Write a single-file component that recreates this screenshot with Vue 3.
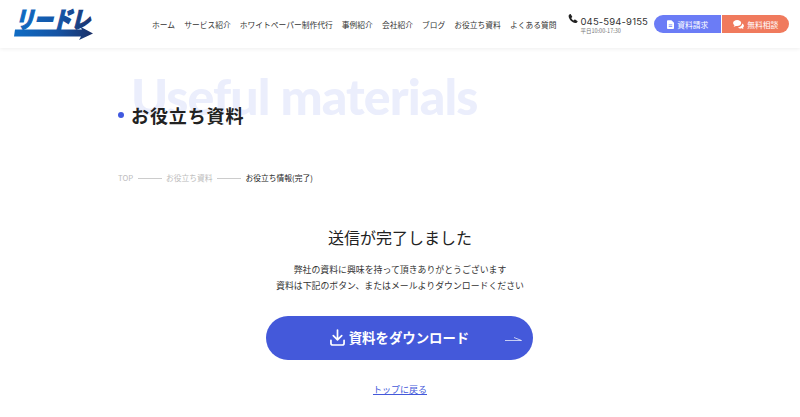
<template>
  <div class="page">
    <header class="header">
      <a class="logo">
        <svg width="80" height="34" viewBox="0 0 80 34">
          <defs>
            <linearGradient id="logoGrad" gradientUnits="userSpaceOnUse" x1="0" x2="80" y1="0" y2="0">
              <stop offset="0" stop-color="#0f6cc4" />
              <stop offset=".55" stop-color="#1553a3" />
              <stop offset="1" stop-color="#1b2f66" />
            </linearGradient>
          </defs>
          <text class="logo-text" transform="translate(1 19.500) skewX(-14) scale(1 1.200)" textLength="75" lengthAdjust="spacingAndGlyphs" fill="url(#logoGrad)" stroke="url(#logoGrad)" stroke-width="1.100">リードレ</text>
          <path d="M1 21.500 L68 21.500 L66 18.500 L79 25.500 L65 32 L67 28.500 L0 28.500 Z" fill="url(#logoGrad)" />
        </svg>
      </a>
      <nav class="nav">
        <a v-for="item in navItems" :key="item">{{ item }}</a>
      </nav>
      <div class="tel">
        <div class="tel-num">
          <svg width="10" height="11" viewBox="0 0 24 24"><path fill="#222" d="M6.600 1.500 10 7.200c.4.600.2 1.300-.3 1.800L7.800 10.700c1 2.500 3 4.700 5.500 6l1.900-1.900c.5-.5 1.200-.6 1.800-.3l5.500 3.300c.7.400.8 1.200.4 1.800-1.300 2-3.100 3.400-5.400 3.200C10 22 2.200 13.800 1.500 6.500 1.300 4.500 3 2.500 4.800 1.200c.6-.4 1.400-.3 1.800.3z" /></svg>
          <span>045-594-9155</span>
        </div>
        <div class="tel-time">平日10:00-17:30</div>
      </div>
      <div class="cta">
        <a class="cta-btn cta-doc">
          <svg width="7" height="9" viewBox="0 0 16 20"><path fill="#fff" d="M2 0h8l6 6v12a2 2 0 0 1-2 2H2a2 2 0 0 1-2-2V2a2 2 0 0 1 2-2z" /><path fill="#6b7cf6" d="M4 10h8v1.500H4zM4 14h8v1.500H4z" /></svg>
          資料請求
        </a>
        <a class="cta-btn cta-talk">
          <svg width="11" height="9" viewBox="0 0 24 20"><path fill="#fff" d="M9 0c5 0 9 3 9 6.800s-4 6.800-9 6.800c-1 0-2-.1-2.900-.4C4.800 14.200 3 15 1 15c1-1 1.800-2.200 2-3.400C1.200 10.400 0 8.700 0 6.800 0 3 4 0 9 0z" /><path fill="#fff" d="M20 8c2.500 1 4 3 4 5.200 0 1.600-.8 3-2.200 4 .2 1 .9 2 1.700 2.800-1.700 0-3.200-.6-4.300-1.500-.7.200-1.500.3-2.200.3-2.500 0-4.700-.9-6-2.400 5.500-.2 9.500-3.900 9-8.400z" /></svg>
          無料相談
        </a>
      </div>
    </header>

    <main class="main">
      <div class="title-block">
        <div class="title-en">Useful materials</div>
        <h1 class="title"><i class="dot"></i>お役立ち資料</h1>
      </div>
      <div class="crumbs">
        <span class="crumb">TOP</span>
        <i class="crumb-line"></i>
        <span class="crumb">お役立ち資料</span>
        <i class="crumb-line"></i>
        <span class="crumb-now">お役立ち情報(完了)</span>
      </div>
      <section class="done">
        <h2>送信が完了しました</h2>
        <p>弊社の資料に興味を持って頂きありがとうございます<br />資料は下記のボタン、またはメールよりダウンロードください</p>
        <a class="dl">
          <svg width="15" height="17" viewBox="0 0 16 18" fill="none" stroke="#fff" stroke-width="1.800" stroke-linecap="round" stroke-linejoin="round">
            <path d="M8 1v10M3.500 7 8 11.500 12.500 7M1 12v3a2 2 0 0 0 2 2h10a2 2 0 0 0 2-2v-3" />
          </svg>
          <span>資料をダウンロード</span>
          <svg class="dl-arrow" width="17" height="5" viewBox="0 0 17 5" fill="none" stroke="#fff" stroke-width=".7">
            <path d="M0 4.500h16.500L9 1.500" />
          </svg>
        </a>
        <a class="back">トップに戻る</a>
      </section>
    </main>
  </div>
</template>

<script setup>
const navItems = [
  'ホーム',
  'サービス紹介',
  'ホワイトペーパー制作代行',
  '事例紹介',
  '会社紹介',
  'ブログ',
  'お役立ち資料',
  'よくある質問'
]
</script>

<style>
html, body {
  margin: 0;
  overflow: hidden;
  background: #fff;
}
</style>

<style scoped>
.page {
  width: 800px;
  height: 417px;
  overflow: hidden;
  font-family: "Noto Sans CJK JP", "Noto Sans", sans-serif;
  color: #222;
}

.header {
  height: 48px;
  display: flex;
  align-items: center;
  box-shadow: 0 1px 4px rgba(0, 0, 0, .07);
  position: relative;
}

.logo {
  flex: none;
  width: 80px;
  margin-left: 14px;
  height: 34px;
  display: block;
  margin-top: 1px;
}
.logo svg {
  display: block;
  overflow: visible;
}
.logo-text {
  font-size: 19px;
  font-weight: 900;
}

.nav {
  flex: none;
  display: flex;
  gap: 9.100px;
  margin-left: 58px;
  font-size: 7.750px;
  color: #333;
  white-space: nowrap;
}

.tel {
  flex: none;
  margin-left: 12px;
  width: 86px;
  padding-top: 1px;
  box-sizing: border-box;
}
.tel-num {
  display: flex;
  align-items: center;
  gap: 2px;
  font-family: Inter, sans-serif;
  font-size: 9.500px;
  line-height: 13px;
  letter-spacing: .15px;
  color: #333;
  white-space: nowrap;
}
.tel-num svg {
  margin-top: -5px;
}
.tel-time {
  font-size: 5.500px;
  line-height: 7px;
  color: #777;
  margin-left: 12px;
  white-space: nowrap;
}

.cta {
  flex: none;
  display: flex;
  gap: 1.500px;
}
.cta-btn {
  width: 66.500px;
  height: 18px;
  display: flex;
  align-items: center;
  justify-content: center;
  gap: 3px;
  color: #fff;
  font-size: 7.750px;
  white-space: nowrap;
}
.cta-doc {
  background: #6b7cf6;
  border-radius: 9px 0 0 9px;
}
.cta-talk {
  background: #f07a5d;
  border-radius: 0 9px 9px 0;
}

.main {
  width: 564px;
  margin: 0 auto;
}

.title-block {
  position: relative;
  height: 124px;
  padding-top: 1px;
  box-sizing: border-box;
}
.title-en {
  position: absolute;
  left: 13px;
  top: 18px;
  font-family: Lato, sans-serif;
  font-weight: 900;
  font-size: 50px;
  line-height: 60px;
  letter-spacing: -.9px;
  color: #ebeefc;
  white-space: nowrap;
}
.title {
  position: relative;
  margin: 0;
  padding-top: 53px;
  display: flex;
  align-items: center;
  gap: 7px;
  font-size: 18px;
  line-height: 26px;
  font-weight: 700;
  color: #222;
  letter-spacing: .9px;
}
.dot {
  width: 6px;
  height: 6px;
  border-radius: 50%;
  background: #4059e0;
}

.crumbs {
  display: flex;
  align-items: center;
  font-size: 7.750px;
  line-height: 12px;
  color: #bbb;
  gap: 4.500px;
}
.crumb-line {
  width: 24px;
  height: 1px;
  background: #ccc;
}
.crumb-now {
  color: #222;
}

.done {
  display: flex;
  flex-direction: column;
  align-items: center;
  margin-top: 40px;
  text-align: center;
}
.done h2 {
  margin: 0;
  font-size: 16px;
  line-height: 26px;
  font-weight: 400;
  color: #222;
}
.done p {
  margin: 12px 0 0;
  font-size: 8.900px;
  line-height: 16px;
  color: #333;
}
.dl {
  margin-top: 22px;
  margin-right: 1px;
  width: 267px;
  height: 44px;
  border-radius: 22px;
  background: #4459da;
  color: #fff;
  font-size: 13.400px;
  font-weight: 700;
  display: flex;
  align-items: center;
  justify-content: center;
  gap: 4px;
  position: relative;
  padding-bottom: 2px;
  box-sizing: border-box;
}
.dl-arrow {
  position: absolute;
  right: 11px;
  top: 20px;
}
.back {
  margin-top: 23px;
  font-size: 9px;
  line-height: 14px;
  color: #4459da;
  text-decoration: underline;
}
</style>
